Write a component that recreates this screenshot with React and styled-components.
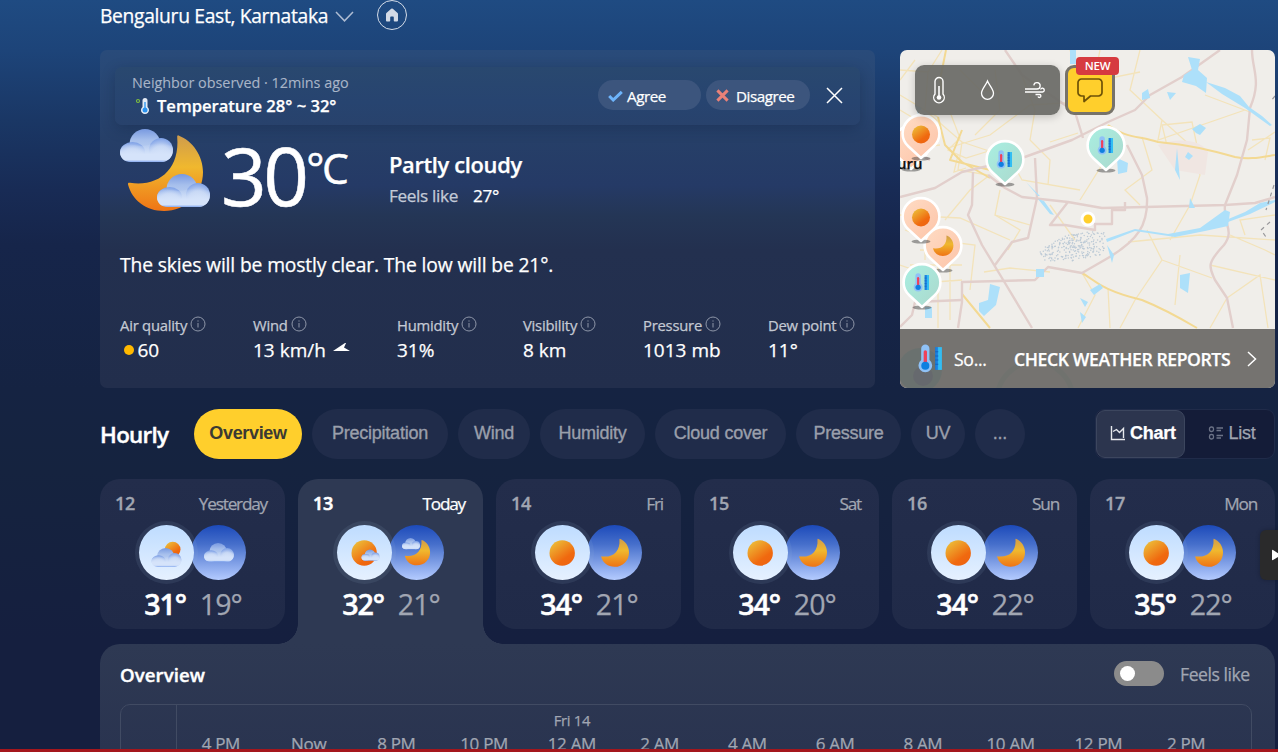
import React from 'react';
import styled, { createGlobalStyle, css } from 'styled-components';

const GlobalStyle = createGlobalStyle`
  * { box-sizing: border-box; }
  html, body { margin: 0; padding: 0; overflow: hidden; background: #15203f; }
  body { font-family: 'Open Sans', 'Noto Sans', sans-serif; color: #fff; -webkit-text-stroke-width: 0.25px; }
  svg { display: block; flex: none; }
`;

const muted = '#a1a6b2';

const Page = styled.div`
  width: 1278px;
  height: 752px;
  overflow: hidden;
  display: flex;
  flex-direction: column;
  padding: 0 3px 0 100px;
  border-bottom: 3px solid #a5161c;
  background: linear-gradient(180deg, #1f4b82 0, #1d4479 50px, #1a3765 120px, #182b55 190px, #16254a 245px, #152342 390px, #15233f 470px, #151f3f 640px, #151f3f 100%);
`;

const Header = styled.header`
  height: 50px;
  flex: none;
  display: flex;
  align-items: flex-start;
`;

const Place = styled.h1`
  margin: 4px 7px 0 0;
  font-size: 19.3px;
  line-height: 24px;
  font-weight: 400;
  letter-spacing: -0.34px;
  white-space: nowrap;
`;

const PlaceChevron = styled.svg`
  margin-top: 10px;
`;

const HomeButton = styled.button`
  margin: 0 0 0 23px;
  padding: 0;
  width: 30px;
  height: 30px;
  border-radius: 50%;
  border: 1px solid #d4dce8;
  background: transparent;
  display: flex;
  align-items: center;
  justify-content: center;
`;

const TopRow = styled.section`
  display: flex;
  gap: 25px;
  height: 338px;
  flex: none;
`;

const CurrentCard = styled.article`
  width: 775px;
  border-radius: 7px;
  padding: 17px 15px 0;
  display: flex;
  flex-direction: column;
  background: linear-gradient(180deg, #294b7a 0, #28446f 60px, #263f68 90px, #253a66 135px, #243656 165px, #23304f 200px, #222e4c 100%);
`;

const Report = styled.div`
  height: 58px;
  flex: none;
  border-radius: 7px;
  padding: 0 17px 2px 17px;
  display: flex;
  align-items: center;
  background: linear-gradient(180deg, #29486f, #274470 60%, #28426c);
  box-shadow: 0 4px 14px rgba(10, 25, 50, 0.28);
`;

const ReportText = styled.div`
  flex: 1;
  display: flex;
  flex-direction: column;
`;

const ReportMeta = styled.div`
  font-size: 14.4px;
  line-height: 22px;
  letter-spacing: -0.02px;
  color: #a9b5c8;
  -webkit-text-stroke-width: 0.1px;
`;

const ReportValue = styled.div`
  display: flex;
  align-items: center;
  gap: 8px;
  font-size: 16.6px;
  line-height: 24px;
  font-weight: 600;
  letter-spacing: -0.02px;
`;

const Vote = styled.button`
  width: ${(p) => p.$width}px;
  height: 30px;
  margin: 0 ${(p) => p.$after}px 0 0;
  padding: 1px 0 0 10px;
  border: 0;
  border-radius: 15px;
  background: #3c557d;
  color: #fff;
  font: 400 15.2px/24px 'Open Sans', sans-serif;
  letter-spacing: -0.45px;
  display: flex;
  align-items: center;
  gap: ${(p) => p.$gap}px;
`;

const Now = styled.div`
  height: 91px;
  padding-left: 5px;
  display: flex;
  flex: none;
`;

const NowIcon = styled.svg`
  margin-top: 3px;
`;

const Degrees = styled.div`
  margin-left: 10px;
  width: 168px;
  display: flex;
  align-items: flex-start;
  font-size: 80px;
  line-height: 100px;
  letter-spacing: -3.6px;
  -webkit-text-stroke-width: 0.5px;
`;

const Unit = styled.span`
  font-size: 42.5px;
  line-height: 58px;
  margin: 14px 0 0 1px;
  letter-spacing: -2.6px;
`;

const Condition = styled.div`
  font-size: 21.9px;
  line-height: 30px;
  font-weight: 600;
  letter-spacing: -0.35px;
  margin-top: 25px;
`;

const Feels = styled.div`
  display: flex;
  gap: 15px;
  font-size: 17.2px;
  line-height: 24px;
  margin-top: 4px;
  letter-spacing: -0.35px;
  span { color: #c3cad7; }
`;

const Summary = styled.p`
  margin: 36px 0 0 5px;
  font-size: 19.3px;
  line-height: 26px;
  letter-spacing: -0.14px;
`;

const Facts = styled.dl`
  display: flex;
  margin: 37px 0 0 5px;
`;

const Fact = styled.div`
  width: ${(p) => p.$width}px;
  flex: none;
`;

const FactName = styled.dt`
  display: flex;
  align-items: center;
  gap: 3px;
  font-size: 14.8px;
  line-height: 20px;
  letter-spacing: -0.22px;
  color: #c4c9d3;
  white-space: nowrap;
  svg { margin-bottom: 3px; }
`;

const FactValue = styled.dd`
  margin: 0;
  display: flex;
  align-items: center;
  gap: 4px;
  padding-left: ${(p) => p.$indent || 0}px;
  font-size: 19px;
  line-height: 30px;
  letter-spacing: 0;
`;

const Dot = styled.span`
  width: 10px;
  height: 10px;
  border-radius: 50%;
  background: #ffb900;
`;

const MapCard = styled.article`
  position: relative;
  width: 375px;
  height: 338px;
  border-radius: 7px;
  overflow: hidden;
  background: #f0eeea;
  display: flex;
  flex-direction: column;
  justify-content: space-between;
`;

const MapArt = styled.svg`
  position: absolute;
  left: 0;
  top: 0;
`;

const CityLabel = styled.span`
  position: absolute;
  left: -3px;
  top: 103px;
  font: 600 15px/20px 'Open Sans', sans-serif;
  color: #111;
`;

const PinSpot = styled.svg`
  position: absolute;
  left: ${(p) => p.$x - 22}px;
  top: ${(p) => p.$y - 22}px;
`;

const MapTools = styled.div`
  position: relative;
  display: flex;
  gap: 5px;
  padding: 15px;
`;

const LayerGroup = styled.div`
  width: 145px;
  height: 50px;
  border-radius: 9px;
  background: rgba(107, 106, 102, 0.93);
  box-shadow: 0 2px 8px rgba(0, 0, 0, 0.2);
  display: grid;
  grid-template-columns: repeat(3, 48.2px);
  place-items: center;
`;

const ChatButton = styled.div`
  position: relative;
  width: 50px;
  height: 50px;
  border-radius: 9px;
  border: 3px solid #77736a;
  background: #ffcf2c;
  display: flex;
  align-items: center;
  justify-content: center;
`;

const NewBadge = styled.span`
  position: absolute;
  left: 8px;
  top: -11px;
  width: 43px;
  height: 18px;
  border-radius: 4px;
  background: #d63b40;
  text-align: center;
  font-size: 11.5px;
  line-height: 18px;
  font-weight: 600;
  letter-spacing: -0.2px;
  -webkit-text-stroke-width: 0;
`;

const ReportsBar = styled.div`
  position: relative;
  height: 59px;
  padding: 0 15px 0 18px;
  display: flex;
  align-items: center;
  background: rgba(108, 107, 104, 0.94);
`;

const ReportsShort = styled.span`
  margin-left: 11px;
  width: 60px;
  font-size: 17.6px;
  letter-spacing: -0.3px;
`;

const ReportsLink = styled.span`
  flex: 1;
  font-size: 17.6px;
  font-weight: 600;
  letter-spacing: -0.4px;
  white-space: nowrap;
`;

const HourlyBar = styled.nav`
  margin-top: 21px;
  height: 50px;
  flex: none;
  display: flex;
  align-items: center;
`;

const HourlyTitle = styled.h2`
  margin: 1px 0 0;
  width: 94px;
  font-size: 22.4px;
  line-height: 30px;
  font-weight: 600;
  letter-spacing: -0.7px;
  -webkit-text-stroke-width: 0.4px;
`;

const Pills = styled.div`
  display: flex;
  flex: 1;
  gap: 10px;
`;

const Pill = styled.button`
  width: ${(p) => p.$width}px;
  height: 50px;
  padding: 0 0 2px;
  border: 0;
  border-radius: 25px;
  background: ${(p) => (p.$active ? '#ffcf2c' : '#202c4a')};
  color: ${(p) => (p.$active ? '#3b3a33' : '#9a9fab')};
  font: ${(p) => (p.$active ? 700 : 400)} 18px/24px 'Liberation Sans', Arial, sans-serif;
  letter-spacing: ${(p) => (p.$active ? -0.35 : -0.25)}px;
  -webkit-text-stroke: ${(p) => (p.$active ? 0 : 0.35)}px currentColor;
  white-space: nowrap;
`;

const ViewSwitch = styled.div`
  width: 180px;
  height: 50px;
  border-radius: 9px;
  border: 1px solid #202b49;
  background: #141c38;
  display: flex;
`;

const ViewOption = styled.div`
  width: 89px;
  height: 48px;
  padding: 0 0 2px ${(p) => (p.$active ? 5 : 5)}px;
  display: flex;
  align-items: center;
  justify-content: center;
  gap: 4px;
  font: ${(p) => (p.$active ? 700 : 400)} 18px/24px 'Liberation Sans', Arial, sans-serif;
  letter-spacing: -0.25px;
  color: ${(p) => (p.$active ? '#fff' : '#a1a6b2')};
  ${(p) => p.$active && css`
    border-radius: 9px;
    border: 1px solid #3c465e;
    background: #2c354e;
  `}
`;

const Days = styled.section`
  position: relative;
  margin-top: 20px;
  height: 165px;
  flex: none;
  display: flex;
  gap: 13px;
`;

const Day = styled.article`
  position: relative;
  width: 185px;
  height: 150px;
  border-radius: 20px;
  background: linear-gradient(180deg, #232d4b, #202a48);
  ${(p) => p.$active && css`
    height: 165px;
    border-radius: 20px 20px 0 0;
    background: #2e3953;
    &::before, &::after {
      content: '';
      position: absolute;
      bottom: 0;
      width: 20px;
      height: 20px;
    }
    &::before { left: -20px; background: radial-gradient(circle at 0 0, transparent 19.5px, #2e3953 20px); }
    &::after { right: -20px; background: radial-gradient(circle at 100% 0, transparent 19.5px, #2e3953 20px); }
  `}
`;

const DayHead = styled.div`
  display: flex;
  justify-content: space-between;
  padding: 11px 18px 0 15px;
  font-size: 17.2px;
  line-height: 27px;
  letter-spacing: -1.2px;
  color: ${(p) => (p.$active ? '#fff' : muted)};
  b { font-size: 18px; font-weight: 600; letter-spacing: -0.3px; -webkit-text-stroke-width: ${(p) => (p.$active ? 0.6 : 0.3)}px; }
`;

const Discs = styled.div`
  margin-top: 8px;
  display: flex;
  justify-content: center;
`;

const Disc = styled.div`
  width: 55px;
  height: 55px;
  border-radius: 50%;
  display: flex;
  align-items: center;
  justify-content: center;
  ${(p) => p.$night ? css`
    margin-left: -3px;
    background: linear-gradient(180deg, #1c4aba, #466fcb 35%, #b4cbff);
  ` : css`
    position: relative;
    z-index: 1;
    background: linear-gradient(180deg, #bedcff, #e6f1ff);
    box-shadow: 0 0 0 4px rgba(160, 190, 220, 0.1);
  `}
`;

const Temps = styled.div`
  display: flex;
  justify-content: center;
  gap: 14px;
  margin-top: 4px;
  padding-left: 1px;
  font-size: 28.6px;
  line-height: 39px;
  letter-spacing: -1px;
  b { font-weight: 600; letter-spacing: -1.1px; -webkit-text-stroke-width: 0.5px; }
  span { color: ${muted}; }
`;

const NextButton = styled.div`
  position: absolute;
  right: -3px;
  top: 51px;
  width: 18px;
  height: 50px;
  border-radius: 6px 0 0 6px;
  background: #2a2a2b;
  box-shadow: 0 0 4px rgba(0, 0, 0, 0.25);
  display: flex;
  align-items: center;
  justify-content: flex-end;
`;

const Panel = styled.section`
  flex: 1;
  min-height: 0;
  border-radius: 20px 20px 0 0;
  background: linear-gradient(180deg, #2e3953, #2a3450);
  padding: 17px 23px 0 20px;
  overflow: hidden;
`;

const PanelHead = styled.div`
  display: flex;
  align-items: center;
  height: 27px;
`;

const PanelTitle = styled.h3`
  margin: 0;
  flex: 1;
  font-size: 18.6px;
  line-height: 26px;
  font-weight: 600;
  letter-spacing: 0.1px;
  -webkit-text-stroke-width: 0.4px;
`;

const Toggle = styled.div`
  width: 50px;
  height: 25px;
  margin: 0 16px 2px 0;
  padding: 5px 6px;
  border-radius: 13px;
  background: #8b8b8b;
`;

const Knob = styled.div`
  width: 15px;
  height: 15px;
  border-radius: 50%;
  background: #fff;
`;

const ToggleLabel = styled.span`
  width: 72px;
  margin-bottom: 1px;
  font-size: 17.6px;
  line-height: 24px;
  letter-spacing: -0.45px;
  color: ${muted};
  white-space: nowrap;
`;

const Timeline = styled.div`
  margin-top: 16px;
  height: 200px;
  border: 1px solid #414b63;
  border-radius: 10px;
  display: flex;
`;

const AxisCell = styled.div`
  width: 56px;
  border-right: 1px solid #414b63;
`;

const Hour = styled.div`
  width: 87.75px;
  text-align: center;
  color: ${muted};
  font-size: 17px;
  line-height: 24px;
  letter-spacing: -0.3px;
`;

const DateMark = styled.div`
  height: 27px;
  padding-top: 3px;
  font-size: 14.8px;
`;

const SharedDefs = () => (
  <svg width="0" height="0" style={{ position: 'absolute' }}>
    <defs>
      <linearGradient id="sun" x1="0.1" y1="0.05" x2="0.75" y2="0.95">
        <stop offset="0" stopColor="#ecc03a" /><stop offset="0.75" stopColor="#f0690f" /><stop offset="1" stopColor="#ee6410" />
      </linearGradient>
      <linearGradient id="moon" x1="0" y1="0" x2="0" y2="1">
        <stop offset="0" stopColor="#cf9c4c" /><stop offset="0.42" stopColor="#f0b82e" /><stop offset="1" stopColor="#ef7415" />
      </linearGradient>
      <linearGradient id="cloudTop" x1="0" y1="0" x2="0" y2="1">
        <stop offset="0" stopColor="#7899e0" /><stop offset="0.35" stopColor="#a6bfec" /><stop offset="1" stopColor="#cfdff6" />
      </linearGradient>
      <radialGradient id="cloudLobe" cx="0.5" cy="0.75" r="0.75">
        <stop offset="0" stopColor="#dde9fb" /><stop offset="0.55" stopColor="#c5d6f4" /><stop offset="1" stopColor="#7c9fe6" />
      </radialGradient>
      <linearGradient id="cloudBase" x1="0" y1="0" x2="0" y2="1">
        <stop offset="0" stopColor="#c9daf6" stopOpacity="0" /><stop offset="0.6" stopColor="#d5e3fa" /><stop offset="0.88" stopColor="#d5e3fa" /><stop offset="1" stopColor="#84a8ee" />
      </linearGradient>
      <linearGradient id="ruler" x1="0" y1="0" x2="1" y2="0">
        <stop offset="0" stopColor="#1677d9" /><stop offset="0.45" stopColor="#1f8be6" /><stop offset="0.5" stopColor="#32bdf3" /><stop offset="1" stopColor="#32bdf3" />
      </linearGradient>
      <linearGradient id="teal" x1="0" y1="0" x2="1" y2="1"><stop offset="0" stopColor="#a8efe2" /><stop offset="1" stopColor="#acd8cc" /></linearGradient>
      <linearGradient id="peach" x1="0" y1="0" x2="1" y2="1"><stop offset="0" stopColor="#ffdcc4" /><stop offset="1" stopColor="#fcc3a8" /></linearGradient>
    </defs>
  </svg>
);

const Cloud = ({ t }) => (
  <g transform={t}>
    <circle cx="25" cy="15.5" r="15.5" fill="url(#cloudTop)" />
    <circle cx="41" cy="21" r="12" fill="url(#cloudLobe)" />
    <ellipse cx="12.5" cy="23" rx="12.5" ry="10" fill="url(#cloudLobe)" />
    <path d="M0 23C0 20 2 17 6 15L22 17L41 14L52 17C53 19 53 20 53 21C53 28 48 33 41 33H11C4 33 0 29 0 23Z" fill="url(#cloudBase)" />
  </g>
);

const Moon = ({ t }) => (
  <path transform={t} fill="url(#moon)" d="M58.5 7.4C73 13 83 28 83 44C83 66 66 83 44 83C26 83 12 72 8 56.5C7.6 55 8.6 54.4 10 54.8C38 59 60 42 57.2 9C57.1 7.8 57.6 7 58.5 7.4Z" />
);

const skies = {
  sun: <circle cx="27.2" cy="28" r="12.7" fill="url(#sun)" />,
  moon: <Moon t="translate(11.3 11.1) scale(0.37)" />,
  cloudySun: <><circle cx="33.7" cy="24.5" r="7.8" fill="url(#sun)" /><Cloud t="translate(12.5 23) scale(0.565)" /></>,
  cloud: <Cloud t="translate(13 18) scale(0.565)" />,
  sunnyCloud: <><circle cx="27.2" cy="28" r="12.7" fill="url(#sun)" /><Cloud t="translate(24.5 24.5) scale(0.34)" /></>,
  cloudyMoon: <><Moon t="translate(13.3 12.5) scale(0.335)" /><Cloud t="translate(13 13) scale(0.34)" /></>,
};

const ThermoRuler = ({ t }) => (
  <g transform={t}>
    <path d="M4 4.5A4 4 0 0 1 12 4.5V15.5A6.6 6.6 0 1 1 4 15.5Z" fill="#8fc1f6" />
    <rect x="6.4" y="6" width="3.2" height="14" rx="1.6" fill="#f0405a" />
    <circle cx="8" cy="21" r="3.9" fill="#0f7fe0" />
    <rect x="17.5" y="3" width="6.5" height="22" fill="url(#ruler)" />
    <path d="M17.5 7.5h3M17.5 11.5h3M17.5 15.5h3M17.5 19.5h3" stroke="#1264bd" strokeWidth="1" />
  </g>
);

const pinShape = 'M22 47L9.5 35.5C5 31.5 3.6 27 3.6 22.5A18.4 18.4 0 1 1 40.4 22.5C40.4 27 39 31.5 34.5 35.5Z';

const Pin = ({ x, y, kind }) => (
  <PinSpot $x={x} $y={y} width="44" height="52" viewBox="0 0 44 52">
    <ellipse cx="22" cy="47.5" rx="9.5" ry="2" fill="rgba(70,70,70,.5)" />
    <path d={pinShape} fill={kind === 'report' ? 'url(#teal)' : 'url(#peach)'} stroke="#fff" strokeWidth="2.6" strokeLinejoin="round" />
    {kind === 'report' && <ThermoRuler t="translate(12.7 13) scale(0.68)" />}
    {kind === 'sun' && <circle cx="22" cy="23.5" r="9" fill="url(#sun)" />}
    {kind === 'moon' && <Moon t="translate(10 10.5) scale(0.27)" />}
  </PinSpot>
);

const specks = Array.from({ length: 330 }, (_, i) => {
  const u = (Math.sin(i * 12.9898) * 43758.5453) % 1;
  const v = (Math.sin(i * 78.233) * 12543.123) % 1;
  return [140 + Math.abs(u) * 65, 182 + Math.abs(v) * 29];
}).filter(([a, b]) => b > 182 + Math.max(0, (172 - a) * 0.55) && b < 212 - Math.max(0, (a - 172) * 0.25));

const MapDrawing = () => (
  <MapArt width="375" height="338" viewBox="0 0 375 338" fill="none">
    <g stroke="#f3e3ba" strokeWidth="1.3">
      <path d="M0 20L28 22L42 0M28 22L25 60M0 45L25 60L38 67M170 0L182 35L176 60M25 60L62 92L58 120L88 125M40 95L0 100M48 98L90 85L130 55L180 52M62 92L110 108L122 130L180 140M90 125L70 140L45 170M75 85L100 60L95 20M180 52L200 30L240 22M240 0L230 40L262 70L258 90L345 60M262 70L290 95L300 125L290 155M305 45L350 62M348 100L375 82M352 90L370 88L365 110M242 87L252 120L225 140L240 155M208 75L205 110L180 150M0 165L60 168L110 190M95 165L120 180L108 200M35 190L75 195L70 240M38 190V278M50 185V270M62 200H20M62 230L35 232M62 215H10M84 222L110 218L150 222M228 192L300 185L375 190M247 180L262 210L235 250L220 278M262 210L312 228M280 205L275 255M310 215L375 230M375 165L340 170L345 185M290 155L270 190M182 223L195 245L178 278M330 185L365 200L375 205M208 238L210 278M327 248L310 278M327 248L360 225L368 278M0 215L20 222M0 60L20 72M5 180L25 188V210" />
      <path d="M262 75L292 72L300 110L270 108ZM120 20L135 60L130 90M100 140L95 165L130 175M150 155L175 190M0 30L15 10M50 62L60 88L48 100L66 108L92 100M58 105L54 122L66 118M130 90L150 110L148 135M178 83L150 92M200 0L195 25M60 20L80 40L100 42" />
    </g>
    <path d="M258 95C275 88 300 88 308 102L305 125L275 120Z" fill="#f0e6e2" />
    <g stroke="#f3d993" strokeWidth="2" strokeLinejoin="round">
      <path d="M208 75C225 88 240 86 258 92C290 95 310 100 335 107C350 110 362 107 375 105" />
      <path d="M182 223C195 230 200 240 242 250C262 258 280 268 297 278" />
      <path d="M38 67L45 95L62 112L90 128M62 244L90 278M46 0L40 30L45 50M62 80L50 110L90 120" />
    </g>
    <g stroke="#e2cfcc" strokeWidth="2.4" strokeLinejoin="round">
      <path d="M320 0L282 27L250 45L235 60L208 72L172 90L122 108L62 122L35 138L0 147" />
      <path d="M352 0C352 20 362 30 350 58L347 90L337 125L325 155C323 175 335 180 324 195C305 215 310 218 315 230L327 248L333 278" />
      <path d="M227 95L242 125L247 148C248 175 238 190 208 208L182 223L148 217L135 230L62 232L62 252L58 278" />
      <path d="M88 125L105 138L122 147L168 152L202 158L245 157L325 155L355 153L375 147" />
      <path d="M73 122L72 155L68 165L82 195L102 228L132 278M135 108L137 148L128 188L112 192L95 215" />
      <path d="M105 0L122 25L175 62L183 88M62 250L15 252L12 265L0 277M0 95L30 110M168 152L150 175H165L195 180V174H212V160H225V152" />
    </g>
    <g fill="#ade0fa">
      <path d="M288 7L300 9L298 20L307 28L306 43L296 36L282 32L284 25L292 20ZM292 79L300 74L306 78L300 85L296 83ZM217 108L228 113L227 122L218 124ZM190 92L198 88L200 102L193 103ZM242 43L248 39L250 48L242 50ZM288 102L293 106L289 110L285 107Z" />
      <path d="M306 32L325 38L340 46L349 57L362 66L372 75L370 76L345 58L322 44ZM138 149L144 151L154 165L150 164ZM126 132L140 146L138 146Z" />
      <path d="M90 234L100 237L96 255L84 266L79 261V253L88 250ZM206 189L235 179L268 184L300 178L325 160L330 162L328 176L305 181L275 187L235 181L207 192ZM207 195L214 205L212 213ZM136 219H144V227H136ZM190 240L200 234L203 238L194 245ZM180 248L188 252L185 257ZM180 262L186 267L182 273ZM280 225L290 223L288 243L280 238ZM25 257H32V268H25ZM267 42L276 43L270 50ZM15 55L22 58L18 64ZM170 0H176V14H170ZM277 98L280 130L275 120ZM290 148L295 158H289Z" />
      <path d="M326 170L345 162L360 153L375 150V152L350 164L328 172Z" />
    </g>
    <g fill="#bccad6">{specks.map(([a, b], i) => <circle key={i} cx={a} cy={b} r="0.75" />)}</g>
    <path d="M374 135L366 160M370 172L361 180L366 187M375 46L370 52" stroke="#98979a" strokeWidth="1.2" strokeDasharray="4 4" />
    <circle cx="20" cy="320" r="22" fill="#0ab7c4" opacity=".7" /><circle cx="23" cy="326" r="10" fill="#0a4fc4" />
    <circle cx="135" cy="350" r="38" stroke="#55b8b0" strokeWidth="5" opacity=".5" />
    <circle cx="188" cy="169" r="6" fill="#ffcf2c" stroke="#fff" strokeWidth="3" />
  </MapArt>
);

const Info = () => (
  <svg width="16" height="16" viewBox="0 0 16 16" fill="none" stroke="#8e96a8" strokeWidth="1">
    <circle cx="8" cy="8" r="7" /><path d="M8 7V11.5M8 4.4V5.6" />
  </svg>
);

const facts = [
  ['Air quality', '60', 133],
  ['Wind', '13 km/h', 144],
  ['Humidity', '31%', 126],
  ['Visibility', '8 km', 120],
  ['Pressure', '1013 mb', 125],
  ['Dew point', '11°', 100],
];

const pills = [
  ['Overview', 108], ['Precipitation', 136], ['Wind', 72], ['Humidity', 105],
  ['Cloud cover', 131], ['Pressure', 105], ['UV', 54], ['...', 50],
];

const days = [
  ['12', 'Yesterday', 'cloudySun', 'cloud', '31°', '19°'],
  ['13', 'Today', 'sunnyCloud', 'cloudyMoon', '32°', '21°'],
  ['14', 'Fri', 'sun', 'moon', '34°', '21°'],
  ['15', 'Sat', 'sun', 'moon', '34°', '20°'],
  ['16', 'Sun', 'sun', 'moon', '34°', '22°'],
  ['17', 'Mon', 'sun', 'moon', '35°', '22°'],
];

const hours = ['4 PM', 'Now', '8 PM', '10 PM', '12 AM', '2 AM', '4 AM', '6 AM', '8 AM', '10 AM', '12 PM', '2 PM'];

export default function App() {
  return (
    <>
      <GlobalStyle />
      <SharedDefs />
      <Page>
        <Header>
          <Place>Bengaluru East, Karnataka</Place>
          <PlaceChevron width="19" height="13" viewBox="0 0 19 13" fill="none" stroke="#aebcd2" strokeWidth="1.5"><path d="M1 2L9.5 10.8L18 2" /></PlaceChevron>
          <HomeButton aria-label="Home">
            <svg width="14" height="14" viewBox="0 0 14 14" fill="#d3dae6"><path d="M6.2.8a1.2 1.2 0 0 1 1.6 0L12.6 5c.3.3.4.6.4 1v6.6c0 .5-.4.9-.9.9H9.6a.8.8 0 0 1-.8-.8V9.4a.8.8 0 0 0-.8-.8H6a.8.8 0 0 0-.8.8v3.3a.8.8 0 0 1-.8.8H1.9a.9.9 0 0 1-.9-.9V6c0-.4.1-.7.4-1Z" /></svg>
          </HomeButton>
        </Header>

        <TopRow>
          <CurrentCard>
            <Report>
              <ReportText>
                <ReportMeta>Neighbor observed · 12mins ago</ReportMeta>
                <ReportValue>
                  <svg width="17" height="18" viewBox="0 0 17 18">
                    <circle cx="6" cy="4" r="1.5" fill="none" stroke="#7fbf3f" strokeWidth="1.1" />
                    <path d="M10.5 3.5a2.5 2.5 0 0 1 5 0V10a4 4 0 1 1-5 0Z" fill="#e4ebf5" />
                    <rect x="12.2" y="5" width="1.6" height="7" fill="#4aa3f0" /><circle cx="13" cy="13" r="2.5" fill="#2b93f0" />
                  </svg>
                  Temperature 28° ~ 32°
                </ReportValue>
              </ReportText>
              <Vote $width={103} $after={5} $gap={4}>
                <svg width="15" height="12" viewBox="0 0 15 12"><path d="M1.2 6L5.2 10L13.8 1.8" fill="none" stroke="#6db4fb" strokeWidth="3" /></svg>
                Agree
              </Vote>
              <Vote $width={104} $after={16} $gap={7}>
                <svg width="13" height="13" viewBox="0 0 13 13"><path d="M1.4 1.4L11.6 11.6M11.6 1.4L1.4 11.6" stroke="#ea8178" strokeWidth="3" /></svg>
                Disagree
              </Vote>
              <svg width="17" height="17" viewBox="0 0 17 17"><path d="M1 1L16 16M16 1L1 16" stroke="#fff" strokeWidth="1.5" /></svg>
            </Report>

            <Now>
              <NowIcon width="91" height="84" viewBox="0 0 91 84">
                <Moon />
                <Cloud t="translate(0 1)" />
                <Cloud t="translate(37 46)" />
              </NowIcon>
              <Degrees>30<Unit>°C</Unit></Degrees>
              <div>
                <Condition>Partly cloudy</Condition>
                <Feels><span>Feels like</span>27°</Feels>
              </div>
            </Now>

            <Summary>The skies will be mostly clear. The low will be 21°.</Summary>

            <Facts>
              {facts.map(([name, value, width]) => (
                <Fact key={name} $width={width}>
                  <FactName>{name}<Info /></FactName>
                  <FactValue $indent={name === 'Air quality' ? 3.5 : 0}>
                    {name === 'Air quality' && <Dot />}
                    {value}
                    {name === 'Wind' && (
                      <svg width="22" height="14" viewBox="0 0 22 14"><path d="M3 8L16.5 -1L14 4.500L20 8Z" fill="#fff" /></svg>
                    )}
                  </FactValue>
                </Fact>
              ))}
            </Facts>
          </CurrentCard>

          <MapCard>
            <MapDrawing />
            <Pin x={11} y={94} kind="plain" />
            <Pin x={21} y={83} kind="sun" />
            <CityLabel>uru</CityLabel>
            <Pin x={104.5} y={109} kind="report" />
            <Pin x={206} y={95} kind="report" />
            <Pin x={42.5} y={195} kind="moon" />
            <Pin x={21} y={166} kind="sun" />
            <Pin x={22} y={232} kind="report" />
            <MapTools>
              <LayerGroup>
                <svg width="14" height="28" viewBox="0 0 14 28" fill="none" stroke="#fff" strokeWidth="1.4">
                  <path d="M3 5.5a4 4 0 0 1 8 0V18a5.3 5.3 0 1 1-8 0Z" /><path d="M7 10V20" strokeWidth="1.6" /><circle cx="7" cy="21.5" r="2.3" fill="#fff" stroke="none" />
                </svg>
                <svg width="15" height="22" viewBox="0 0 15 22" fill="none" stroke="#fff" strokeWidth="1.3"><path d="M7.5 2C9 6 13.5 10.5 13.5 14.3a6 6 0 0 1-12 0C1.5 10.5 6 6 7.5 2Z" /></svg>
                <svg width="22" height="18" viewBox="0 0 22 18" fill="none" stroke="#fff" strokeWidth="1.3">
                  <path d="M1 8H13a3.2 3.2 0 1 0-3.2-3.6M1 11H18.5a1.9 1.9 0 1 0-1.9-2.5M11.5 13.5H15.5a1.5 1.5 0 1 1-1.5 2" />
                </svg>
              </LayerGroup>
              <ChatButton>
                <svg width="26" height="25" viewBox="0 0 26 25" fill="none" stroke="#6d5207" strokeWidth="1.7" strokeLinejoin="round"><path d="M4.5 1H21.5a3.5 3.5 0 0 1 3.5 3.5V14.5a3.5 3.5 0 0 1-3.5 3.5H13.5L7 23.5V18H4.5A3.5 3.5 0 0 1 1 14.5V4.5A3.5 3.5 0 0 1 4.5 1Z" /></svg>
                <NewBadge>NEW</NewBadge>
              </ChatButton>
            </MapTools>
            <ReportsBar>
              <svg width="25" height="29" viewBox="1 0 24 28"><ThermoRuler /></svg>
              <ReportsShort>So...</ReportsShort>
              <ReportsLink>CHECK WEATHER REPORTS</ReportsLink>
              <svg width="14" height="18" viewBox="0 0 14 18" fill="none" stroke="#fff" strokeWidth="1.5"><path d="M2 2L9.5 9L2 16" /></svg>
            </ReportsBar>
          </MapCard>
        </TopRow>

        <HourlyBar>
          <HourlyTitle>Hourly</HourlyTitle>
          <Pills>
            {pills.map(([label, width], i) => <Pill key={label} $width={width} $active={i === 0}>{label}</Pill>)}
          </Pills>
          <ViewSwitch>
            <ViewOption $active>
              <svg width="16" height="16" viewBox="0 0 16 16" fill="none" stroke="#e6e8ec" strokeWidth="1.4"><path d="M1.5 1V14.5H15M3 6.5L6.5 4.5L9.5 7.5L13.5 3.5V13" /></svg>
              Chart
            </ViewOption>
            <ViewOption>
              <svg width="16" height="16" viewBox="0 0 16 16" fill="none" stroke="#6c7387" strokeWidth="1.3"><rect x="1.5" y="2" width="4" height="4.5" rx="1.8" /><rect x="1.5" y="9.5" width="4" height="4.5" rx="1.8" /><path d="M8.5 3H15M8.5 5.5H13M8.5 10.5H15M8.5 13H13" /></svg>
              List
            </ViewOption>
          </ViewSwitch>
        </HourlyBar>

        <Days>
          {days.map(([num, name, am, pm, hi, lo], i) => (
            <Day key={num} $active={i === 1}>
              <DayHead $active={i === 1}><b>{num}</b>{name}</DayHead>
              <Discs>
                <Disc><svg width="55" height="55" viewBox="0 0 55 55">{skies[am]}</svg></Disc>
                <Disc $night><svg width="55" height="55" viewBox="0 0 55 55">{skies[pm]}</svg></Disc>
              </Discs>
              <Temps><b>{hi}</b><span>{lo}</span></Temps>
            </Day>
          ))}
          <NextButton><svg width="7" height="12" viewBox="0 0 7 12"><path d="M1 1.5Q1 .5 2 1L10 6L2 11Q1 11.5 1 10.5Z" fill="#fff" /></svg></NextButton>
        </Days>

        <Panel>
          <PanelHead>
            <PanelTitle>Overview</PanelTitle>
            <Toggle><Knob /></Toggle>
            <ToggleLabel>Feels like</ToggleLabel>
          </PanelHead>
          <Timeline>
            <AxisCell />
            {hours.map((h) => (
              <Hour key={h}>
                <DateMark>{h === '12 AM' ? 'Fri 14' : ''}</DateMark>
                {h}
              </Hour>
            ))}
          </Timeline>
        </Panel>
      </Page>
    </>
  );
}
